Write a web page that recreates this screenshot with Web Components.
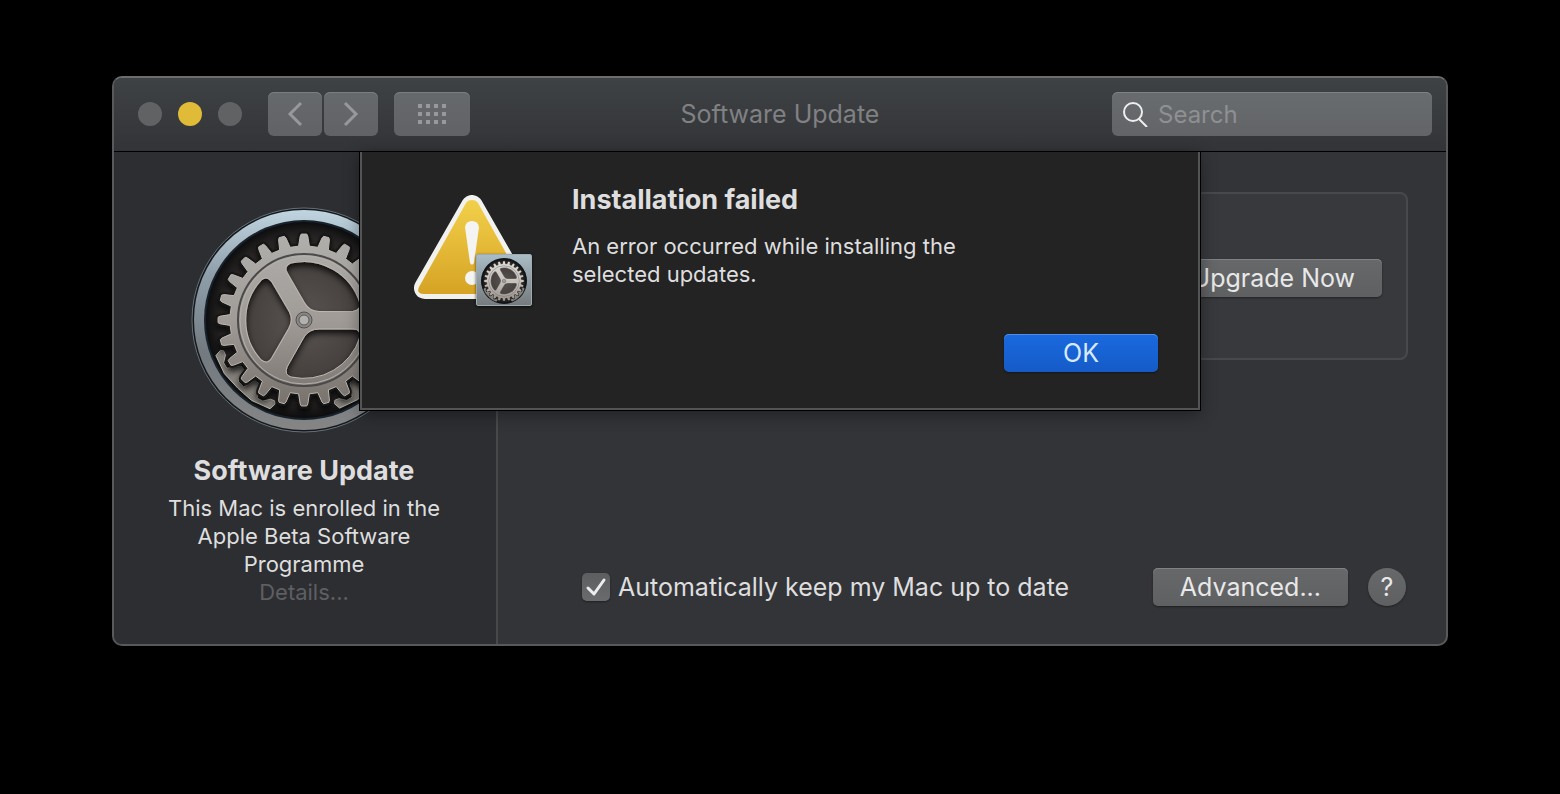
<!DOCTYPE html>
<html lang="en">
<head>
<meta charset="utf-8">
<title>Software Update</title>
<style>
  body {
    margin: 0;
    padding: 76px 112px;
    background: #000;
    color: #dededf;
    font-family: Inter, "Liberation Sans", sans-serif;
    font-size: 25px;
    line-height: 32px;
  }
</style>
</head>
<body>
<prefs-window>
  <window-toolbar slot="toolbar" heading="Software Update"></window-toolbar>
  <update-sidebar slot="sidebar" heading="Software Update">This Mac is enrolled in the Apple Beta Software Programme</update-sidebar>
  <update-pane></update-pane>
  <alert-sheet slot="sheet" heading="Installation failed">An error occurred while installing the selected updates.</alert-sheet>
</prefs-window>

<script>
// point on a circle, angle in degrees
function polar(r, deg) {
  const a = deg * Math.PI / 180
  return `${(r * Math.cos(a)).toFixed(2)} ${(r * Math.sin(a)).toFixed(2)}`
}

function gearPath() {
  const points = []
  for (let i = 0; i < 24; i++) {
    const c = i * 15
    points.push(polar(74, c - 4.2), polar(84, c - 2.6), polar(86, c - 1.8), polar(86, c + 1.8), polar(84, c + 2.6), polar(74, c + 4.2))
  }
  return 'M' + points.join('L') + 'Z'
}

// toothed bracket that sits between the ring and the gear
function bracketPath(s) {
  const points = [
    polar(95, s - 1), polar(89, s - 3), polar(86, s - 2), polar(86, s + 1),
    polar(91, s + 5), polar(91, s + 9), polar(78, s + 13), polar(78, s + 17),
    polar(90, s + 20), polar(90, s + 25), polar(78, s + 28), polar(78, s + 32),
    polar(91, s + 36), polar(91, s + 40), polar(86, s + 44), polar(86, s + 47),
    polar(89, s + 48), polar(95, s + 46), polar(96, s + 34), polar(95, s + 22),
    polar(96, s + 11)
  ]
  return 'M' + points.join('L') + 'Z'
}

const hole = 'M15 9H49Q57 9 56 17A59 59 0 0 1 -13 57Q-20 55 -17 47L0 17Q5 9 15 9Z'

const gearTemplate = document.createElement('template')
gearTemplate.innerHTML = `
<style>
  :host {
    display: block;
    width: 226px;
    height: 226px;
  }
  svg {
    display: block;
    width: 100%;
    height: 100%;
  }
  :host([plain]) .ring {
    display: none;
  }
  :host([plain]) .wheel {
    filter: brightness(1.25);
  }
</style>
<svg viewBox="-113 -113 226 226" aria-hidden="true">
  <defs>
    <linearGradient id="ring" x1="0" y1="0" x2="0" y2="1">
      <stop offset="0" stop-color="#c0d5e0"/>
      <stop offset=".3" stop-color="#8e9ea9"/>
      <stop offset=".65" stop-color="#737a80"/>
      <stop offset="1" stop-color="#858585"/>
    </linearGradient>
    <linearGradient id="metal" x1="0" y1="0" x2="0" y2="1">
      <stop offset="0" stop-color="#b0afac"/>
      <stop offset=".5" stop-color="#a09b97"/>
      <stop offset="1" stop-color="#77716c"/>
    </linearGradient>
    <radialGradient id="well">
      <stop offset="0" stop-color="#5a5553"/>
      <stop offset=".6" stop-color="#45403e"/>
      <stop offset=".85" stop-color="#292625"/>
      <stop offset="1" stop-color="#0d0d0e"/>
    </radialGradient>
    <mask id="holes" maskUnits="userSpaceOnUse" x="-100" y="-100" width="200" height="200">
      <rect x="-100" y="-100" width="200" height="200" fill="#fff"/>
      <path d="${hole}"/>
      <path d="${hole}" transform="rotate(120)"/>
      <path d="${hole}" transform="rotate(240)"/>
    </mask>
    <filter id="shadow" x="-20%" y="-20%" width="140%" height="140%">
      <feDropShadow dx="0" dy="4" stdDeviation="3" flood-color="#000" flood-opacity=".8"/>
    </filter>
  </defs>
  <g class="ring">
    <circle r="112" fill="#16191c" stroke="#65717a"/>
    <circle r="110" fill="url(#ring)"/>
  </g>
  <circle r="100" fill="#17222c"/>
  <circle r="98" fill="url(#well)"/>
  <g fill="#85817b" stroke="#bcb8b1" stroke-linejoin="round">
    <path d="${bracketPath(22)}"/>
    <path d="${bracketPath(112)}"/>
  </g>
  <g class="wheel" filter="url(#shadow)">
    <g mask="url(#holes)">
      <path d="${gearPath()}" fill="none" stroke="#171514" stroke-width="5" stroke-linejoin="round"/>
      <path d="${gearPath()}" fill="url(#metal)" stroke="#bab6b1" stroke-linejoin="round"/>
      <circle r="66" fill="none" stroke="#4b4948" stroke-width="2"/>
      <circle r="64" fill="none" stroke="#b3b0ac"/>
    </g>
    <g fill="none" stroke="#beb9b2">
      <path d="${hole}"/>
      <path d="${hole}" transform="rotate(120)"/>
      <path d="${hole}" transform="rotate(240)"/>
    </g>
  </g>
  <circle r="8" fill="#898785" stroke="#555250"/>
  <circle r="5" fill="#b3b1af" stroke="#5c5856"/>
</svg>
`

class GearIcon extends HTMLElement {
  constructor() {
    super()
    this.attachShadow({mode: 'open'})
    this.shadowRoot.appendChild(gearTemplate.content.cloneNode(true))
  }
}

const buttonTemplate = document.createElement('template')
buttonTemplate.innerHTML = `
<style>
  :host {
    display: block;
  }
  button {
    display: block;
    width: 100%;
    height: 38px;
    padding: 0 27px;
    border: 0;
    border-radius: 5px;
    background: linear-gradient(#67686a, #5f6062);
    box-shadow: inset 0 1px #818284, 0 1px 2px #0006;
    color: #e8e8e8;
    font: inherit;
    white-space: nowrap;
  }
  :host([primary]) button {
    background: linear-gradient(#1a69df, #155bc7);
    box-shadow: inset 0 1px #4f8ee8, 0 1px 2px #0006;
    color: #d9eaff;
  }
  :host([round]) button {
    width: 38px;
    padding: 0;
    border-radius: 50%;
    box-shadow: 0 1px 2px #0006;
  }
</style>
<button type="button"><slot></slot></button>
`

class PushButton extends HTMLElement {
  constructor() {
    super()
    this.attachShadow({mode: 'open'})
    this.shadowRoot.appendChild(buttonTemplate.content.cloneNode(true))
  }
}

const windowTemplate = document.createElement('template')
windowTemplate.innerHTML = `
<style>
  :host {
    display: block;
    overflow: hidden;
    border: 2px solid #58595b;
    border-top-color: #6b6d6e;
    border-radius: 10px;
    background: #333438;
  }
  .content {
    position: relative;
    display: grid;
    grid-template-columns: 384px 1fr;
  }
</style>
<slot name="toolbar"></slot>
<div class="content">
  <slot name="sidebar"></slot>
  <slot></slot>
  <slot name="sheet"></slot>
</div>
`

class PrefsWindow extends HTMLElement {
  constructor() {
    super()
    this.attachShadow({mode: 'open'})
    this.shadowRoot.appendChild(windowTemplate.content.cloneNode(true))
  }
}

const toolbarTemplate = document.createElement('template')
toolbarTemplate.innerHTML = `
<style>
  * {
    box-sizing: border-box;
  }
  :host {
    display: grid;
    grid-template-columns: 1fr auto 1fr;
    align-items: center;
    padding: 14px 14px 15px;
    border-bottom: 1px solid #000;
    background: linear-gradient(#3f4245, #323438);
  }
  button {
    display: grid;
    place-items: center;
    padding: 0;
    border: 0;
  }
  .left, .lights, .nav {
    display: flex;
    align-items: center;
  }
  .left {
    gap: 16px;
  }
  .lights {
    gap: 16px;
    margin: 0 10px;
  }
  .lights button {
    width: 24px;
    height: 24px;
    border-radius: 50%;
    background: #616264;
  }
  .lights .minimise {
    background: #e0bb38;
  }
  .nav {
    gap: 2px;
  }
  .nav button, .all {
    width: 54px;
    height: 44px;
    border-radius: 6px;
    background: linear-gradient(#66696c, #616265);
    box-shadow: inset 0 1px #7b7d7f;
  }
  .left .all {
    width: 76px;
  }
  h1 {
    margin: 0;
    color: #808183;
    font-size: 25px;
    font-weight: 400;
  }
  .search {
    display: flex;
    align-items: center;
    gap: 10px;
    justify-self: end;
    width: 320px;
    height: 44px;
    padding: 0 10px;
    border-radius: 6px;
    background: linear-gradient(#696c6f, #626467);
    box-shadow: inset 0 1px #7f8183;
  }
  .search svg {
    flex: none;
  }
  input {
    flex: 1;
    min-width: 0;
    height: 100%;
    padding: 0;
    border: 0;
    outline: 0;
    background: none;
    color: #eee;
    font: inherit;
    font-size: 24px;
  }
  input::placeholder {
    color: #8e9092;
    opacity: 1;
  }
</style>
<div class="left">
  <div class="lights">
    <button type="button" aria-label="Close"></button>
    <button type="button" class="minimise" aria-label="Minimise"></button>
    <button type="button" aria-label="Zoom"></button>
  </div>
  <div class="nav">
    <button type="button" aria-label="Back">
      <svg width="16" height="26" fill="none" stroke="#96989a" stroke-width="3"><path d="M14 2L3 13L14 24"/></svg>
    </button>
    <button type="button" aria-label="Forward">
      <svg width="16" height="26" fill="none" stroke="#96989a" stroke-width="3"><path d="M2 2L13 13L2 24"/></svg>
    </button>
  </div>
  <button type="button" class="all" aria-label="Show All">
    <svg width="28" height="20" fill="#98999b">
      <path d="M0 0h4v4h-4zM8 0h4v4h-4zM16 0h4v4h-4zM24 0h4v4h-4zM0 8h4v4h-4zM8 8h4v4h-4zM16 8h4v4h-4zM24 8h4v4h-4zM0 16h4v4h-4zM8 16h4v4h-4zM16 16h4v4h-4zM24 16h4v4h-4z"/>
    </svg>
  </button>
</div>
<h1></h1>
<label class="search">
  <svg width="26" height="26" fill="none" stroke="#eeeeee" stroke-width="2" aria-hidden="true">
    <circle cx="11" cy="11" r="9"/>
    <path d="M17 18L25 26"/>
  </svg>
  <input type="search" placeholder="Search" aria-label="Search">
</label>
`

class WindowToolbar extends HTMLElement {
  constructor() {
    super()
    this.attachShadow({mode: 'open'})
    this.shadowRoot.appendChild(toolbarTemplate.content.cloneNode(true))
    this.shadowRoot.querySelector('h1').textContent = this.getAttribute('heading')
  }
}

const sidebarTemplate = document.createElement('template')
sidebarTemplate.innerHTML = `
<style>
  :host {
    display: flex;
    flex-direction: column;
    align-items: center;
    padding: 55px 42px 38px 40px;
    border-right: 2px solid #48494b;
    background: #2d2e32;
    text-align: center;
  }
  h2 {
    margin: 22px 0 7px;
    font-size: 27px;
    font-weight: 700;
    white-space: nowrap;
  }
  p {
    max-width: 290px;
    margin: 0;
    font-size: 22px;
    line-height: 28px;
  }
  button {
    padding: 0;
    border: 0;
    background: none;
    color: #5e5f62;
    font: inherit;
    font-size: 22px;
    line-height: 28px;
  }
</style>
<gear-icon></gear-icon>
<h2></h2>
<p><slot></slot></p>
<button type="button">Details...</button>
`

class UpdateSidebar extends HTMLElement {
  constructor() {
    super()
    this.attachShadow({mode: 'open'})
    this.shadowRoot.appendChild(sidebarTemplate.content.cloneNode(true))
    this.shadowRoot.querySelector('h2').textContent = this.getAttribute('heading')
  }
}

const paneTemplate = document.createElement('template')
paneTemplate.innerHTML = `
<style>
  * {
    box-sizing: border-box;
  }
  :host {
    display: flex;
    flex-direction: column;
    justify-content: space-between;
    padding: 40px 38px 38px 40px;
  }
  .box {
    display: flex;
    align-items: center;
    justify-content: flex-end;
    height: 168px;
    padding: 4px 24px 0;
    border: 2px solid #48494c;
    border-radius: 8px;
    background: #38393d;
  }
  footer {
    display: flex;
    align-items: center;
    gap: 20px;
    padding: 0 2px 0 44px;
  }
  label {
    display: flex;
    align-items: center;
    gap: 8px;
    margin-right: auto;
  }
  .tick {
    display: grid;
  }
  .tick > * {
    grid-area: 1 / 1;
  }
  input {
    width: 28px;
    height: 28px;
    margin: 0;
    border-radius: 5px;
    appearance: none;
    background: linear-gradient(#5d5e60, #6a6b6d);
    box-shadow: 0 1px 2px #0006;
  }
  svg {
    pointer-events: none;
    visibility: hidden;
  }
  input:checked + svg {
    visibility: visible;
  }
</style>
<div class="box">
  <push-button>Upgrade Now</push-button>
</div>
<footer>
  <label>
    <span class="tick">
      <input type="checkbox" checked>
      <svg width="28" height="28" fill="none" stroke="#eeeeee" stroke-width="3" stroke-linecap="round" stroke-linejoin="round"><path d="M6 15L12 21L22 7"/></svg>
    </span>
    Automatically keep my Mac up to date
  </label>
  <push-button>Advanced...</push-button>
  <push-button round>?</push-button>
</footer>
`

class UpdatePane extends HTMLElement {
  constructor() {
    super()
    this.attachShadow({mode: 'open'})
    this.shadowRoot.appendChild(paneTemplate.content.cloneNode(true))
  }
}

const sheetTemplate = document.createElement('template')
sheetTemplate.innerHTML = `
<style>
  * {
    box-sizing: border-box;
  }
  :host {
    position: absolute;
    top: 0;
    left: 50%;
    transform: translateX(-50%);
    box-sizing: border-box;
    display: grid;
    grid-template-columns: 118px 1fr;
    column-gap: 40px;
    width: 840px;
    max-width: 100%;
    padding: 32px 40px 36px 52px;
    border: 2px solid #535454;
    border-top: 0;
    background: #232323;
    box-shadow: 0 0 0 1px #000, 0 4px 16px #0006;
  }
  .icon {
    display: grid;
    align-self: start;
    padding-top: 11px;
  }
  .icon > * {
    grid-area: 1 / 1;
  }
  .badge {
    align-self: end;
    justify-self: end;
    display: grid;
    place-items: center;
    width: 56px;
    height: 52px;
    border: 1px solid #9eabb2;
    border-radius: 2px;
    background: linear-gradient(#a9bcc5, #767b7e);
    box-shadow: 0 1px 3px #000a;
  }
  gear-icon {
    width: 52px;
    height: 52px;
  }
  h2 {
    margin: 0 0 16px;
    font-size: 27px;
    font-weight: 700;
  }
  p {
    max-width: 420px;
    margin: 0 0 46px;
    font-size: 22px;
    line-height: 28px;
  }
  push-button {
    width: 154px;
    margin-left: auto;
  }
</style>
<div class="icon">
  <svg width="118" height="111" viewBox="0 0 118 111" aria-hidden="true">
    <defs>
      <linearGradient id="yellow" x1="0" y1="0" x2="0" y2="1">
        <stop offset="0" stop-color="#f2d04a"/>
        <stop offset="1" stop-color="#d6a324"/>
      </linearGradient>
    </defs>
    <path d="M58 11L11 93H105Z" fill="#f1f1ee" stroke="#f1f1ee" stroke-width="22" stroke-linejoin="round"/>
    <path d="M58 5Q62 5 64 8L111 92Q114 99 106 99H10Q2 99 5 92L52 8Q54 5 58 5Z" fill="url(#yellow)"/>
    <path d="M51 32Q52 26 58 26Q64 26 65 32L60 68Q58 71 56 68Z" fill="#f4f4f2"/>
    <circle cx="58" cy="83" r="7" fill="#f4f4f2"/>
  </svg>
  <div class="badge"><gear-icon plain></gear-icon></div>
</div>
<div>
  <h2></h2>
  <p><slot></slot></p>
  <push-button primary>OK</push-button>
</div>
`

class AlertSheet extends HTMLElement {
  constructor() {
    super()
    this.attachShadow({mode: 'open'})
    this.shadowRoot.appendChild(sheetTemplate.content.cloneNode(true))
    this.shadowRoot.querySelector('h2').textContent = this.getAttribute('heading')
  }

  connectedCallback() {
    this.setAttribute('role', 'alertdialog')
    this.setAttribute('aria-label', this.getAttribute('heading'))
  }
}

window.customElements.define('gear-icon', GearIcon)
window.customElements.define('push-button', PushButton)
window.customElements.define('prefs-window', PrefsWindow)
window.customElements.define('window-toolbar', WindowToolbar)
window.customElements.define('update-sidebar', UpdateSidebar)
window.customElements.define('update-pane', UpdatePane)
window.customElements.define('alert-sheet', AlertSheet)
</script>
</body>
</html>
